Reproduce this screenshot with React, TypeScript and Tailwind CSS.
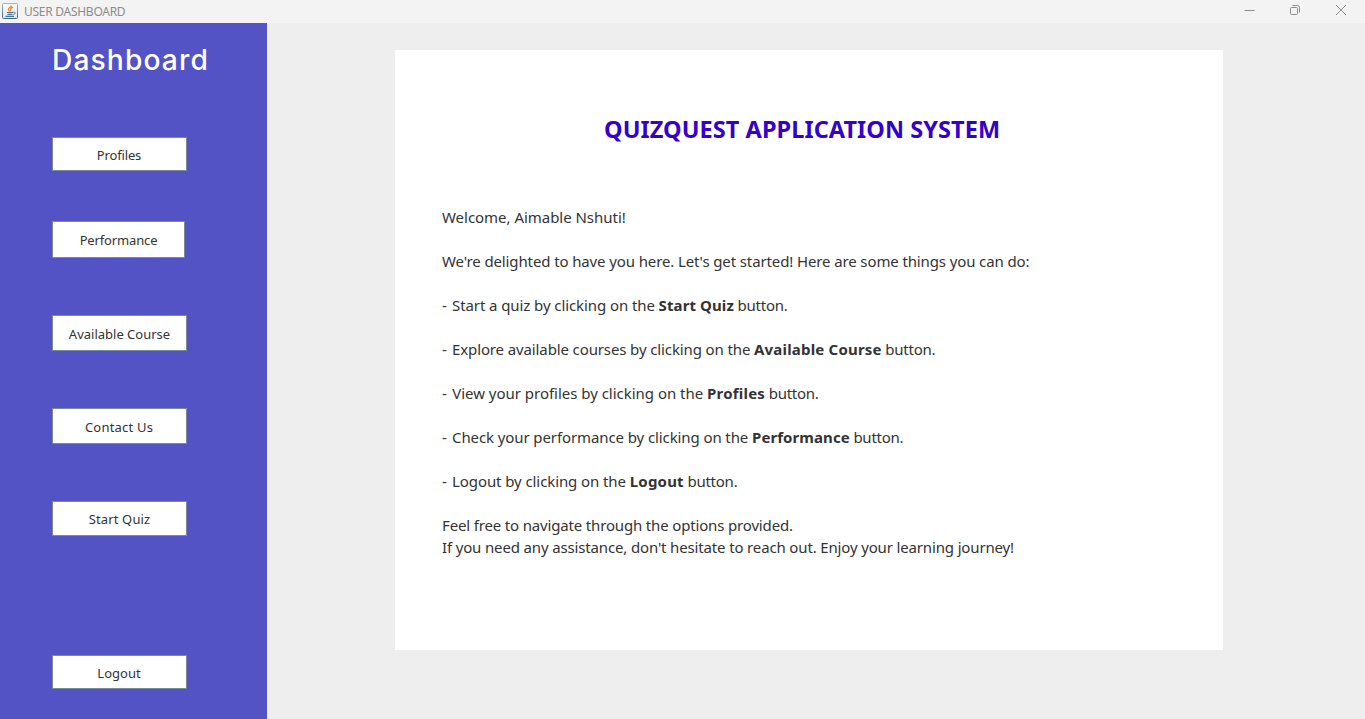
const items = [
  { label: "Profiles", box: "mt-[60px] h-[34px] w-[135px] tracking-[-0.15px] pr-px" },
  { label: "Performance", box: "mt-[50px] h-[37px] w-[133px] tracking-[-0.15px]" },
  { label: "Available Course", box: "mt-[57px] h-[36px] w-[135px]" },
  { label: "Contact Us", box: "mt-[57px] h-[36px] w-[135px] tracking-[0.2px] pr-px" },
  { label: "Start Quiz", box: "mt-[57px] h-[35px] w-[135px] tracking-[0.15px]" },
  { label: "Logout", box: "mt-[119px] h-[34px] w-[135px] pr-px" },
];

const tips = [
  { before: "Start a quiz by clicking on the", name: "Start Quiz", spacing: "tracking-[-0.09px]", bold: "tracking-[0.1px]" },
  { before: "Explore available courses by clicking on the", name: "Available Course", spacing: "tracking-[-0.12px]", bold: "tracking-[0.19px]" },
  { before: "View your profiles by clicking on the", name: "Profiles", spacing: "tracking-[-0.02px]", bold: "tracking-[0.2px]" },
  { before: "Check your performance by clicking on the", name: "Performance", spacing: "tracking-[-0.1px]", bold: "tracking-[0.07px]" },
  { before: "Logout by clicking on the", name: "Logout", spacing: "tracking-[-0.09px]", bold: "tracking-[0.2px]" },
];

function JavaIcon() {
  return (
    <svg width="16" height="16" viewBox="0 0 16 16" fill="none" className="relative -top-px shrink-0">
      <defs>
        <linearGradient id="frame" x1="0" y1="0" x2="0" y2="1">
          <stop offset="0" stopColor="#9db3c4" />
          <stop offset="1" stopColor="#41698a" />
        </linearGradient>
        <linearGradient id="face" x1="0" y1="0" x2="0" y2="1">
          <stop offset="0" stopColor="#ffffff" />
          <stop offset="1" stopColor="#dde5eb" />
        </linearGradient>
      </defs>
      <rect x="0.5" y="0.5" width="15" height="15" rx="1" fill="url(#face)" stroke="url(#frame)" />
      <path d="M9.4 2.6C9.2 4.4 6.1 4.7 6.3 6.3c.1.8 1 1.2 1.5 2M11 4.2C9.2 5 8.2 5.6 8.6 6.6c.3.6.3 1-.2 1.6" stroke="#ed8b32" strokeWidth="1.3" />
      <path d="M5 9.5h6M5.5 11.3h5M3.5 13.4h8.5" stroke="#4a7697" strokeWidth="1.2" />
      <path d="M11.2 9.3c2.8-.7 2.6 1.7.2 2.2" stroke="#4a7697" />
    </svg>
  );
}

export default function App() {
  return (
    <div className="flex h-[719px] w-[1365px] flex-col overflow-hidden bg-[#eeeeee] font-['Noto_Sans',sans-serif] text-[#333333]">
      <header className="flex h-[23px] items-center bg-[#f3f3f3] pl-[2px] text-[#8c8c8c]">
        <JavaIcon />
        <span className="ml-[6px] text-[12px] leading-[23px] tracking-[-0.27px]">USER DASHBOARD</span>
        <div className="ml-auto flex h-[23px] items-start pr-[18px] pt-[4px]">
          <svg width="11" height="12" className="mr-[34px]" fill="none" stroke="#8c8c8c">
            <path d="M0.5 6.5h10" />
          </svg>
          <svg width="12" height="12" className="mr-[34px]" viewBox="0 0 12 12" fill="none" stroke="#8c8c8c">
            <rect x="1.5" y="3.5" width="7" height="7" rx="1" />
            <path d="M3.5 1.5h5a2 2 0 0 1 2 2v5" />
          </svg>
          <svg width="12" height="12" viewBox="0 0 12 12" stroke="#8c8c8c">
            <path d="M1 1l10 10M11 1l-10 10" />
          </svg>
        </div>
      </header>
      <div className="flex flex-1">
        <aside className="flex w-[267px] flex-col bg-[#5353c6] pl-[52px] pt-[18px]">
          <h1 className="h-[36px] font-['Inter',sans-serif] text-[28.2px] font-medium leading-[39px] tracking-[1.1px] text-white">
            Dashboard
          </h1>
          {items.map((item) => (
            <button
              key={item.label}
              className={`shrink-0 border border-[#7a8a99] bg-white pt-px text-[13px] leading-[18px] ${item.box}`}
            >
              {item.label}
            </button>
          ))}
        </aside>
        <main className="ml-[128px] mt-[27px] h-[600px] w-[828px] bg-white pl-[47px] text-[15px] leading-[22px]">
          <h2 className="pl-[162px] pt-[64px] text-[23.5px] font-bold leading-[30px] tracking-[0.06px] text-[#3300cc]">
            QUIZQUEST APPLICATION SYSTEM
          </h2>
          <div className="mt-[62px] flex flex-col gap-[22px]">
            <p className="tracking-[-0.03px]">Welcome, Aimable Nshuti!</p>
            <p className="tracking-[-0.12px]">
              We're delighted to have you here. Let's get started! Here are some things you can do:
            </p>
            {tips.map((tip) => (
              <p key={tip.name} className={tip.spacing}>
                <span className="mr-[1.5px]">-</span> {tip.before} <b className={tip.bold}>{tip.name}</b>
                <span className="tracking-[-0.25px]"> button.</span>
              </p>
            ))}
            <div>
              <p className="tracking-[-0.16px]">Feel free to navigate through the options provided.</p>
              <p className="tracking-[-0.15px]">
                If you need any assistance, don't hesitate to reach out. Enjoy your learning journey!
              </p>
            </div>
          </div>
        </main>
      </div>
    </div>
  );
}
